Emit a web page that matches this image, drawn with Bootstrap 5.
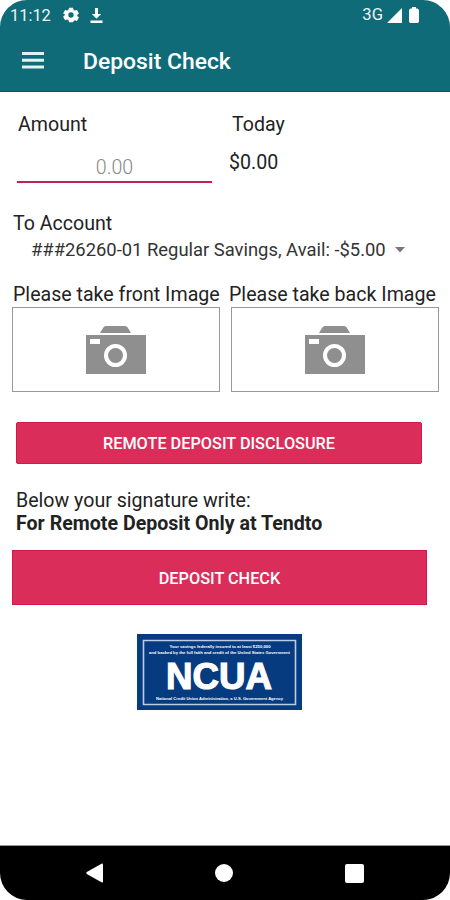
<!DOCTYPE html>
<html lang="en">
<head>
<meta charset="utf-8">
<meta name="viewport" content="width=device-width, initial-scale=1">
<title>Deposit Check</title>
<link href="https://cdn.jsdelivr.net/npm/bootstrap@5.3.0/dist/css/bootstrap.min.css" rel="stylesheet">
<style>
body{background:#fff;font-family:Roboto,"Liberation Sans",sans-serif;font-size:19.6px;line-height:24px;color:#222}
.phone{width:450px;height:900px;border-radius:27px;white-space:nowrap}
.top{background:#106b78;height:92px;border-bottom:1px solid #0a5863;color:#fff}
.status{height:30px;padding:0 31px 0 10px;font-size:16.6px;line-height:28px;color:#eef6f7}
.clock{font-size:16.4px;padding-top:2px}
.gear{margin-left:12px}
.download{margin-left:11px}
.signal{margin-left:4px}
.battery{margin-left:7px}
.bar{height:61px;padding-left:22px}
.title{font-size:22.9px;line-height:30px;font-weight:500;margin:3px 0 0 39px}
.screen{padding:0 11px 0 12px}
.amounts{height:120px;padding:21px 0 0 5px}
.amount-col{width:195px;margin-right:17px}
.amt-label{padding-left:1px}
.amount-in{border:0;border-bottom:2px solid #c81e58;border-radius:0;height:32px;margin-top:14px;padding:2px 0 0;text-align:center;font-size:19.6px;color:#222;background:none;outline:0}
.amount-in::placeholder{color:#888;font-weight:300}
.today{padding-left:3px}
.sum{margin-top:14px}
.account{font-size:18.4px;color:#333;padding:2px 28px 0 19px;height:26px}
.caret-icon{margin-left:9px}
.shots{margin-top:21px;gap:11px}
.shot{width:208px;flex:none}
.front{padding-left:1px}
.back{margin-left:-2px}
.photo{height:85px;border:1px solid #999;padding-top:2px}
.act{background:#db2d59;color:#fff;font-weight:500;font-size:16.3px;border-radius:2px;border:1px solid #d5164d;padding:3px 0 0}
.act:hover{background:#c9244f;color:#fff}
.disclose{height:42px;width:406px;margin:30px 0 0 4px}
.sign{margin:25px 0 0 4px;line-height:23px}
.submit{height:55px;width:415px;border-radius:0;margin-top:15px}
.seal{display:block;margin:29px 0 0 125px}
.keys{height:55px;background:#000;border-top:1px solid #999;padding:0 86px 0 85px}
</style>
</head>
<body>
<div class="phone d-flex flex-column overflow-hidden">
  <header class="top">
    <div class="status d-flex align-items-center">
      <span class="clock">11:12</span>
      <svg class="gear" width="16" height="16" viewBox="0 0 24 24" fill="#fff"><path fill-rule="evenodd" d="M9 1h6l.7 3.2 2 1.2 3.2-1 3 5.2-2.500 2.200v1.800l2.500 2.200-3 5.200-3.200-1-2 1.200L15 23H9l-.7-3-2-1.200-3.200 1-3-5.200 2.500-2.200v-1.800L.1 9.600l3-5.200 3.200 1 2-1.200zM12 8a4 4 0 1 0 0 8 4 4 0 0 0 0-8z"/></svg>
      <svg class="download" width="13" height="17" viewBox="0 0 13 17" fill="#fff"><path d="M5 1h3v6h3.200L6.500 11.800 1.800 7H5zM.5 13.500h12V16H.5z"/></svg>
      <span class="ms-auto">3G</span>
      <svg class="signal" width="15" height="15" viewBox="0 0 15 15" fill="#fff"><path d="M15 0v15H0z"/></svg>
      <svg class="battery" width="10" height="16" viewBox="0 0 10 16" fill="#fff"><path d="M3 0h4v1.500h1.500L10 3v11.500L9 16H1l-1-1.500V3l1.500-1.500H3z"/></svg>
    </div>
    <div class="bar d-flex align-items-center">
      <svg width="22" height="17" viewBox="0 0 22 17" fill="#e4f1f2"><path d="M0 0h22v3H0zM0 6.800h22v3H0zM0 13.600h22v3H0z"/></svg>
      <h1 class="title">Deposit Check</h1>
    </div>
  </header>
  <main class="screen flex-grow-1">
    <div class="amounts d-flex">
      <div class="amount-col">
        <label for="amt" class="amt-label d-block">Amount</label>
        <input id="amt" class="amount-in w-100" placeholder="0.00">
      </div>
      <div><div class="today">Today</div><div class="sum">$0.00</div></div>
    </div>
    <div class="front">To Account</div>
    <div class="account d-flex align-items-center"><span>###26260-01 Regular Savings, Avail: -$5.00</span>
      <svg class="caret-icon" width="10" height="6" viewBox="0 0 10 6" fill="#777"><path d="M0 0h10L5 5.500z"/></svg></div>
    <div class="shots d-flex">
      <div class="shot"><div class="front">Please take front Image</div>
        <div class="photo d-flex align-items-center justify-content-center"><svg width="60" height="49" viewBox="0 0 60 49" fill="#8f8f8f"><path d="M20 0h19q2 0 3 2l3 5H14l3-5q1-2 3-2z"/><path fill-rule="evenodd" d="M0 9h60v39H0zM4 13v5h10v-5zM29.500 18a11.500 11.500 0 1 0 0 23 11.500 11.500 0 0 0 0-23z"/><circle cx="29.500" cy="29.500" r="7.500"/></svg></div></div>
      <div class="shot"><div class="back">Please take back Image</div>
        <div class="photo d-flex align-items-center justify-content-center"><svg width="60" height="49" viewBox="0 0 60 49" fill="#8f8f8f"><path d="M20 0h19q2 0 3 2l3 5H14l3-5q1-2 3-2z"/><path fill-rule="evenodd" d="M0 9h60v39H0zM4 13v5h10v-5zM29.500 18a11.500 11.500 0 1 0 0 23 11.500 11.500 0 0 0 0-23z"/><circle cx="29.500" cy="29.500" r="7.500"/></svg></div></div>
    </div>
    <button class="btn act disclose d-block">REMOTE DEPOSIT DISCLOSURE</button>
    <div class="sign"><div>Below your signature write:</div><strong class="fw-bold">For Remote Deposit Only at Tendto</strong></div>
    <button class="btn act submit d-block">DEPOSIT CHECK</button>
    <svg class="seal" width="165" height="77" viewBox="0 0 165 77" font-family="Liberation Sans, Arial, sans-serif" font-weight="700" fill="#fff" text-anchor="middle">
      <path fill="#063b80" d="M0 0h165v76H0z"/>
      <path fill="none" stroke="#b9cde5" stroke-width="1.600" d="M6.500 6.500h152v64h-152z"/>
      <text x="83" y="14" font-size="4.400" textLength="101" lengthAdjust="spacingAndGlyphs">Your savings federally insured to at least $250,000</text>
      <text x="82.500" y="20" font-size="4.400" textLength="141" lengthAdjust="spacingAndGlyphs">and backed by the full faith and credit of the United States Government</text>
      <text x="82" y="54.500" font-size="37" stroke="#fff" stroke-width="1.200" textLength="106" lengthAdjust="spacingAndGlyphs">NCUA</text>
      <text x="82.500" y="65.500" font-size="4.400" textLength="127" lengthAdjust="spacingAndGlyphs">National Credit Union Administration, a U.S. Government Agency</text>
    </svg>
  </main>
  <nav class="keys d-flex align-items-center justify-content-between" aria-label="System">
    <svg width="18" height="20" viewBox="0 0 18 20" fill="#fff"><path d="M18 1.500v17q0 1.500-1.500.7L1.800 11q-1.300-1 0-2L16.500.800Q18 0 18 1.500z"/></svg>
    <svg width="18" height="18" viewBox="0 0 18 18" fill="#fff"><circle cx="9" cy="9" r="9"/></svg>
    <svg width="19" height="19" viewBox="0 0 19 19" fill="#fff"><rect width="19" height="19" rx="2"/></svg>
  </nav>
</div>
<script src="https://cdn.jsdelivr.net/npm/bootstrap@5.3.0/dist/js/bootstrap.bundle.min.js"></script>
</body>
</html>
